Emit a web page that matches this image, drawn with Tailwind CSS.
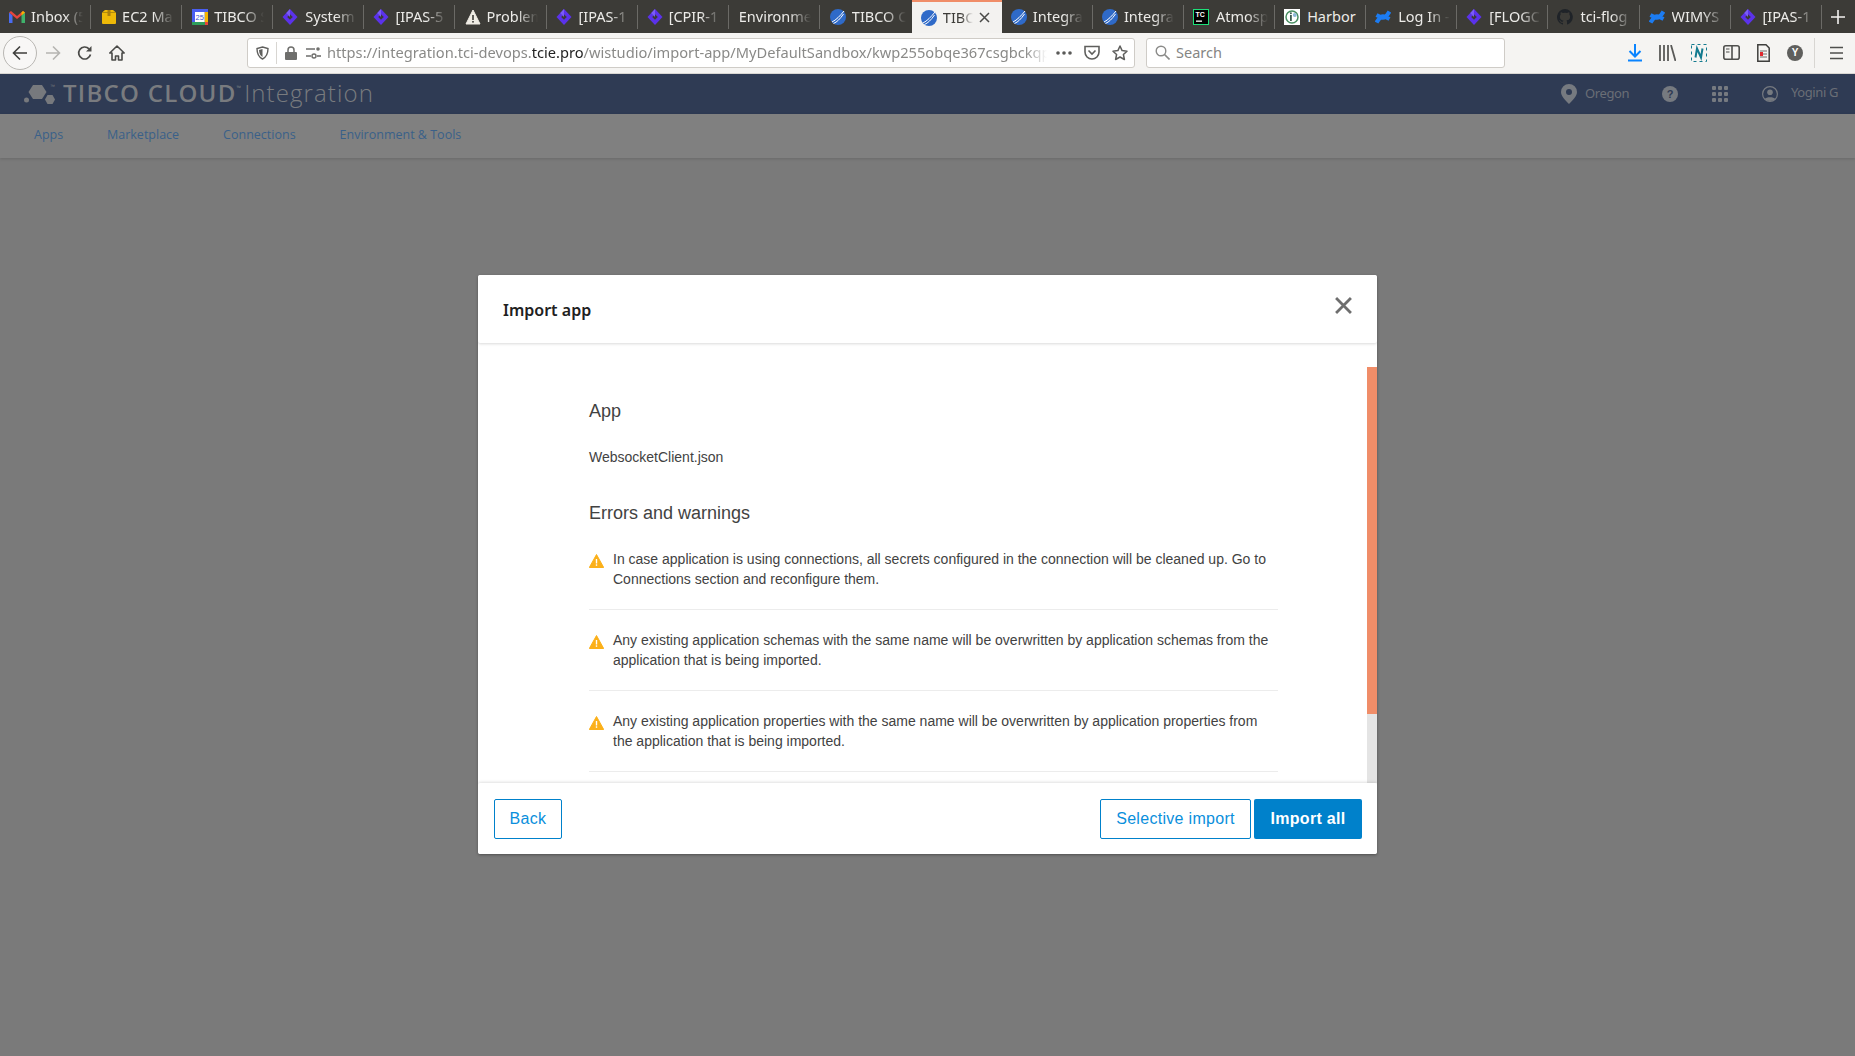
<!DOCTYPE html>
<html lang="en">
<head>
    <meta charset="UTF-8">
    <title>TIBCO Cloud Integration</title>
    <script src="https://cdn.jsdelivr.net/npm/@tailwindcss/browser@4"></script>
</head>
<body class="relative h-[1056px] w-[1855px] overflow-hidden bg-[#7a7a7a] font-['Noto_Sans',sans-serif]">

    <!-- shared favicons -->
    <svg class="hidden">
        <symbol id="jira" viewBox="0 0 16 16"><path d="M8 0 15.500 8 8 16 .5 8Z" fill="#5b32ea"/><path d="M8 5.200 10.800 8 8 10.800 5.200 8Z" fill="#3c3b37"/><path d="M8 0 4.300 4 8 8Z" fill="#7a5cf5"/></symbol>
        <symbol id="tibco" viewBox="0 0 16 16"><circle cx="8" cy="8" r="8" fill="#2f6ac8"/><path d="M2 13C6 11 10 7 14 2M3.500 14.500C7 13 10 10 13.500 5" stroke="#fff" stroke-width="1" fill="none"/></symbol>
        <symbol id="confluence" viewBox="0 0 16 16"><path d="M1.500 13.500C5 7.500 7 6.500 10 7.700L14.500 10M14.500 2.500C11 8.500 9 9.500 6 8.300L1.500 6" fill="none" stroke="#1c7cf2" stroke-width="4.200"/></symbol>
    </svg>

    <!-- Tab strip -->
    <div class="flex h-[33px] items-center bg-[#3c3b37] text-[14.5px] text-[#ecebe8]">
        <div class="relative flex h-full w-[91.1px] shrink-0 items-center pl-[9px]">
            <svg class="h-[14px] w-4 shrink-0" viewBox="0 0 16 14"><path d="M2 1 8 6l6-5 2 1.500L8 9 0 2.500Z" fill="#e8453c"/><path d="M0 2.500V13h3.500V5.500Z" fill="#4a6cf0"/><path d="M16 2.500V13h-3.500V5.500Z" fill="#3fb26b"/><path d="M12.500 5.500 16 2.500 14 1 12.500 2.300Z" fill="#f4b400"/></svg>
            <span class="ml-[6px] w-[52px] overflow-hidden whitespace-nowrap [mask-image:linear-gradient(to_right,black_65%,transparent)]">Inbox (5</span>
            <span class="absolute right-0 h-[24px] w-px bg-[#6b6a66]"></span>
        </div>
        <div class="relative flex h-full w-[91.1px] shrink-0 items-center pl-[10px]">
            <svg class="h-4 w-4 shrink-0" viewBox="0 0 16 16"><path d="M1 3.500 4 1h8l3 2.500V14a1 1 0 0 1-1 1H2a1 1 0 0 1-1-1Z" fill="#eeb908"/><path d="M1 3.500H15" stroke="#8a6b12" stroke-width=".6"/><rect x="6.500" y="1" width="3" height="6" fill="#a87f10"/></svg>
            <span class="ml-[5px] w-[52px] overflow-hidden whitespace-nowrap [mask-image:linear-gradient(to_right,black_60%,transparent)]">EC2 Ma</span>
            <span class="absolute right-0 h-[24px] w-px bg-[#6b6a66]"></span>
        </div>
        <div class="relative flex h-full w-[91.1px] shrink-0 items-center pl-[10px]">
            <svg class="h-4 w-4 shrink-0" viewBox="0 0 16 16"><rect width="16" height="16" fill="#4a5ff0"/><rect x="12.500" y="3" width="3.500" height="10" fill="#f4b400"/><rect x="3" y="3" width="9.500" height="10" fill="#fff"/><rect y="13" width="13" height="3" fill="#2e9e5b"/><rect x="13" y="13" width="3" height="3" fill="#e8453c"/><text x="7.700" y="11" text-anchor="middle" font-size="7.500" font-family="Liberation Sans" fill="#3b4fd0">25</text></svg>
            <span class="ml-[6px] w-[50px] overflow-hidden whitespace-nowrap [mask-image:linear-gradient(to_right,black_60%,transparent)]">TIBCO S</span>
            <span class="absolute right-0 h-[24px] w-px bg-[#6b6a66]"></span>
        </div>
        <div class="relative flex h-full w-[91.1px] shrink-0 items-center pl-[9px]">
            <svg class="h-4 w-4 shrink-0"><use href="#jira"/></svg>
            <span class="ml-[7px] w-[52px] overflow-hidden whitespace-nowrap [mask-image:linear-gradient(to_right,black_60%,transparent)]">System</span>
            <span class="absolute right-0 h-[24px] w-px bg-[#6b6a66]"></span>
        </div>
        <div class="relative flex h-full w-[91.1px] shrink-0 items-center pl-[9px]">
            <svg class="h-4 w-4 shrink-0"><use href="#jira"/></svg>
            <span class="ml-[6px] w-[52px] overflow-hidden whitespace-nowrap [mask-image:linear-gradient(to_right,black_60%,transparent)]">[IPAS-5</span>
            <span class="absolute right-0 h-[24px] w-px bg-[#6b6a66]"></span>
        </div>
        <div class="relative flex h-full w-[91.1px] shrink-0 items-center pl-[10px]">
            <svg class="h-4 w-4 shrink-0" viewBox="0 0 16 16"><path d="M8 1 15 15H1Z" fill="#efece4" stroke="#efece4" stroke-linejoin="round"/><rect x="7.200" y="6" width="1.600" height="5" fill="#3c3b37"/><rect x="7.200" y="12" width="1.600" height="1.600" fill="#3c3b37"/></svg>
            <span class="ml-[5px] w-[52px] overflow-hidden whitespace-nowrap [mask-image:linear-gradient(to_right,black_60%,transparent)]">Problem</span>
            <span class="absolute right-0 h-[24px] w-px bg-[#6b6a66]"></span>
        </div>
        <div class="relative flex h-full w-[91.1px] shrink-0 items-center pl-[9px]">
            <svg class="h-4 w-4 shrink-0"><use href="#jira"/></svg>
            <span class="ml-[7px] w-[52px] overflow-hidden whitespace-nowrap [mask-image:linear-gradient(to_right,black_60%,transparent)]">[IPAS-1</span>
            <span class="absolute right-0 h-[24px] w-px bg-[#6b6a66]"></span>
        </div>
        <div class="relative flex h-full w-[91.1px] shrink-0 items-center pl-[9px]">
            <svg class="h-4 w-4 shrink-0"><use href="#jira"/></svg>
            <span class="ml-[6px] w-[52px] overflow-hidden whitespace-nowrap [mask-image:linear-gradient(to_right,black_60%,transparent)]">[CPIR-1</span>
            <span class="absolute right-0 h-[24px] w-px bg-[#6b6a66]"></span>
        </div>
        <div class="relative flex h-full w-[91.1px] shrink-0 items-center pl-[10px]">
            <span class="w-[72px] overflow-hidden whitespace-nowrap [mask-image:linear-gradient(to_right,black_70%,transparent)]">Environme</span>
            <span class="absolute right-0 h-[24px] w-px bg-[#6b6a66]"></span>
        </div>
        <div class="relative flex h-full w-[92px] shrink-0 items-center pl-[10px]">
            <svg class="h-4 w-4 shrink-0"><use href="#tibco"/></svg>
            <span class="ml-[6px] w-[54px] overflow-hidden whitespace-nowrap [mask-image:linear-gradient(to_right,black_60%,transparent)]">TIBCO C</span>
        </div>
        <!-- active tab -->
        <div class="relative flex h-full w-[90px] shrink-0 items-center border-t-2 border-[#f08d68] bg-[#f3f2f0] pl-[9px] text-[#3c3b37]">
            <svg class="h-4 w-4 shrink-0"><use href="#tibco"/></svg>
            <span class="ml-[6px] w-[30px] overflow-hidden whitespace-nowrap [mask-image:linear-gradient(to_right,black_60%,transparent)]">TIBC</span>
            <svg class="ml-[6px] h-[11px] w-[11px]" viewBox="0 0 11 11"><path d="M1 1 10 10M10 1 1 10" stroke="#4a4a48" stroke-width="1.500"/></svg>
        </div>
        <div class="relative flex h-full w-[91.1px] shrink-0 items-center pl-[9px]">
            <svg class="h-4 w-4 shrink-0"><use href="#tibco"/></svg>
            <span class="ml-[6px] w-[50px] overflow-hidden whitespace-nowrap [mask-image:linear-gradient(to_right,black_60%,transparent)]">Integra</span>
            <span class="absolute right-0 h-[24px] w-px bg-[#6b6a66]"></span>
        </div>
        <div class="relative flex h-full w-[91.1px] shrink-0 items-center pl-[9px]">
            <svg class="h-4 w-4 shrink-0"><use href="#tibco"/></svg>
            <span class="ml-[6px] w-[50px] overflow-hidden whitespace-nowrap [mask-image:linear-gradient(to_right,black_60%,transparent)]">Integra</span>
            <span class="absolute right-0 h-[24px] w-px bg-[#6b6a66]"></span>
        </div>
        <div class="relative flex h-full w-[91.1px] shrink-0 items-center pl-[9px]">
            <svg class="h-4 w-4 shrink-0" viewBox="0 0 16 16"><rect width="16" height="16" fill="#1ee07a"/><rect x="1" y="1" width="14" height="14" fill="#000"/><rect x="3" y="11.500" width="6" height="1.300" fill="#fff"/><text x="2.500" y="8" font-size="7" font-weight="700" font-family="Liberation Sans" fill="#fff">TC</text></svg>
            <span class="ml-[7px] w-[52px] overflow-hidden whitespace-nowrap [mask-image:linear-gradient(to_right,black_60%,transparent)]">Atmosp</span>
            <span class="absolute right-0 h-[24px] w-px bg-[#6b6a66]"></span>
        </div>
        <div class="relative flex h-full w-[91.1px] shrink-0 items-center pl-[9px]">
            <svg class="h-4 w-4 shrink-0" viewBox="0 0 16 16"><rect width="16" height="16" fill="#fff"/><circle cx="8" cy="8" r="6" fill="none" stroke="#4a8f62" stroke-width="1.500"/><rect x="6" y="6" width="1.800" height="6" fill="#3b5a4e"/><circle cx="6.900" cy="4.300" r="1" fill="#3b5a4e"/><circle cx="10.800" cy="6" r="2" fill="#8fb9d8"/></svg>
            <span class="ml-[7px] whitespace-nowrap">Harbor</span>
            <span class="absolute right-0 h-[24px] w-px bg-[#6b6a66]"></span>
        </div>
        <div class="relative flex h-full w-[91.1px] shrink-0 items-center pl-[9px]">
            <svg class="h-4 w-4 shrink-0"><use href="#confluence"/></svg>
            <span class="ml-[7px] w-[52px] overflow-hidden whitespace-nowrap [mask-image:linear-gradient(to_right,black_60%,transparent)]">Log In -</span>
            <span class="absolute right-0 h-[24px] w-px bg-[#6b6a66]"></span>
        </div>
        <div class="relative flex h-full w-[91.1px] shrink-0 items-center pl-[9px]">
            <svg class="h-4 w-4 shrink-0"><use href="#jira"/></svg>
            <span class="ml-[7px] w-[52px] overflow-hidden whitespace-nowrap [mask-image:linear-gradient(to_right,black_60%,transparent)]">[FLOGC</span>
            <span class="absolute right-0 h-[24px] w-px bg-[#6b6a66]"></span>
        </div>
        <div class="relative flex h-full w-[91.1px] shrink-0 items-center pl-[9px]">
            <svg class="h-4 w-4 shrink-0" viewBox="0 0 16 16"><path d="M8 0a8 8 0 0 0-2.500 15.600c.4.100.5-.200.500-.400v-1.400c-2.200.500-2.700-1-2.700-1-.400-.900-.900-1.200-.900-1.200-.700-.500.100-.500.100-.500.800.100 1.200.800 1.200.800.700 1.200 1.900.900 2.300.700.100-.500.300-.900.500-1.100-1.800-.200-3.600-.900-3.600-4 0-.900.300-1.600.800-2.100-.100-.200-.400-1 .100-2.100 0 0 .700-.200 2.200.800a7.500 7.500 0 0 1 4 0c1.500-1 2.200-.800 2.200-.800.400 1.100.200 1.900.100 2.100.500.600.800 1.300.800 2.100 0 3.100-1.900 3.700-3.700 3.900.300.300.600.800.600 1.500v2.200c0 .200.100.500.600.400A8 8 0 0 0 8 0Z" fill="#1f2328"/></svg>
            <span class="ml-[7px] w-[52px] overflow-hidden whitespace-nowrap [mask-image:linear-gradient(to_right,black_60%,transparent)]">tci-flog</span>
            <span class="absolute right-0 h-[24px] w-px bg-[#6b6a66]"></span>
        </div>
        <div class="relative flex h-full w-[91.1px] shrink-0 items-center pl-[9px]">
            <svg class="h-4 w-4 shrink-0"><use href="#confluence"/></svg>
            <span class="ml-[7px] w-[52px] overflow-hidden whitespace-nowrap [mask-image:linear-gradient(to_right,black_60%,transparent)]">WIMYS</span>
            <span class="absolute right-0 h-[24px] w-px bg-[#6b6a66]"></span>
        </div>
        <div class="relative flex h-full w-[91.1px] shrink-0 items-center pl-[9px]">
            <svg class="h-4 w-4 shrink-0"><use href="#jira"/></svg>
            <span class="ml-[7px] w-[52px] overflow-hidden whitespace-nowrap [mask-image:linear-gradient(to_right,black_60%,transparent)]">[IPAS-1</span>
            <span class="absolute right-0 h-[24px] w-px bg-[#6b6a66]"></span>
        </div>
        <svg class="ml-[9px] h-[14px] w-[14px]" viewBox="0 0 14 14"><path d="M7 0V14M0 7H14" stroke="#f2f1ef" stroke-width="1.600"/></svg>
    </div>

    <!-- Toolbar -->
    <div class="flex h-[41px] items-center border-b border-[#d8d6d2] bg-[#f5f4f2] pb-px">
        <div class="ml-[3px] flex h-[34px] w-[34px] items-center justify-center rounded-full border border-[#b9b7b3] bg-[#f8f7f6]">
            <svg class="h-4 w-4" viewBox="0 0 16 16"><path d="M15 8H1.500M8 1.500 1.500 8 8 14.500" fill="none" stroke="#3f3f3d" stroke-width="1.600"/></svg>
        </div>
        <svg class="ml-[8px] h-4 w-4" viewBox="0 0 16 16"><path d="M1 8H14.500M8 1.500 14.500 8 8 14.500" fill="none" stroke="#b5b4b1" stroke-width="1.600"/></svg>
        <svg class="ml-[16px] h-4 w-4" viewBox="0 0 16 16"><path d="M13.500 9.500A6 6 0 1 1 12 3.800" fill="none" stroke="#4a4a48" stroke-width="1.700"/><path d="M14.500 1V6.500H9Z" fill="#4a4a48"/></svg>
        <svg class="ml-[16px] h-4 w-4" viewBox="0 0 16 16"><path d="M8 1 0.800 8H3v7h3.500v-4h3v4H13V8h2.200Z" fill="none" stroke="#4a4a48" stroke-width="1.600" stroke-linejoin="round"/></svg>

        <!-- URL bar -->
        <div class="ml-[122px] flex h-[30px] w-[888px] items-center rounded-[3px] border border-[#cfccc7] bg-white">
            <svg class="ml-[8px] h-[14px] w-[13px]" viewBox="0 0 13 14"><path d="M6.500 1 12 2.500C12 8 10.500 11 6.500 13 2.500 11 1 8 1 2.500Z" fill="none" stroke="#5f5f5d" stroke-width="1.400"/><path d="M6.500 3v8C4 9.500 3.200 7.500 3 4Z" fill="#5f5f5d"/></svg>
            <span class="ml-[7px] h-[22px] w-px bg-[#d8d6d2]"></span>
            <svg class="ml-[8px] h-[14px] w-[12px]" viewBox="0 0 12 14"><path d="M3 6V4a3 3 0 0 1 6 0v2" fill="none" stroke="#6e6e6c" stroke-width="1.500"/><rect y="6" width="12" height="8" rx="1" fill="#6e6e6c"/></svg>
            <svg class="ml-[9px] h-[13px] w-[15px]" viewBox="0 0 15 13"><path d="M0 3H9M0 10H5" stroke="#6e6e6c" stroke-width="1.600"/><circle cx="12" cy="3" r="1.800" fill="#6e6e6c"/><circle cx="8" cy="10" r="2" fill="none" stroke="#6e6e6c" stroke-width="1.400"/><path d="M11 10H15" stroke="#6e6e6c" stroke-width="1.600"/></svg>
            <div class="ml-[6px] w-[720px] overflow-hidden whitespace-nowrap text-[14.65px] text-[#8a8a88] [mask-image:linear-gradient(to_right,black_97%,transparent)]">https://integration.tci-devops.<span class="text-[#232323]">tcie.pro</span>/wistudio/import-app/MyDefaultSandbox/kwp255obqe367csgbckqp</div>
            <svg class="ml-[9px] h-[4px] w-[16px]" viewBox="0 0 16 4"><circle cx="2" cy="2" r="1.800" fill="#5a5a58"/><circle cx="8" cy="2" r="1.800" fill="#5a5a58"/><circle cx="14" cy="2" r="1.800" fill="#5a5a58"/></svg>
            <svg class="ml-[12px] h-[15px] w-[16px]" viewBox="0 0 16 15"><path d="M1 1.500H15V7A7 7 0 0 1 1 7Z" fill="none" stroke="#5f5f5d" stroke-width="1.600"/><path d="M4.500 5.500 8 9l3.500-3.500" fill="none" stroke="#5f5f5d" stroke-width="1.600"/></svg>
            <svg class="ml-[12px] h-[16px] w-[16px]" viewBox="0 0 16 16"><path d="M8 1 10.100 5.600 15 6.200 11.400 9.500 12.400 14.500 8 12 3.600 14.500 4.600 9.500 1 6.200 5.900 5.600Z" fill="none" stroke="#5f5f5d" stroke-width="1.500" stroke-linejoin="round"/></svg>
        </div>

        <!-- Search bar -->
        <div class="ml-[11px] flex h-[30px] w-[359px] items-center rounded-[3px] border border-[#cfccc7] bg-white">
            <svg class="ml-[8px] h-[15px] w-[15px]" viewBox="0 0 15 15"><circle cx="6" cy="6" r="4.800" fill="none" stroke="#8a8a88" stroke-width="1.400"/><path d="M9.500 9.500 14.500 14.500" stroke="#8a8a88" stroke-width="1.600"/></svg>
            <span class="ml-[6px] text-[14.5px] text-[#858583]">Search</span>
        </div>

        <!-- Toolbar actions -->
        <svg class="ml-[123px] h-[18px] w-[14px]" viewBox="0 0 14 18"><path d="M7 0V12M1.500 7 7 12.500 12.500 7" fill="none" stroke="#0a84ff" stroke-width="2"/><path d="M0 16.500H14" stroke="#0a84ff" stroke-width="2"/></svg>
        <svg class="ml-[17px] h-[16px] w-[17px]" viewBox="0 0 17 16"><path d="M1 0V16M5 0V16M9 0V16M12 0 16.500 16" stroke="#5a5a58" stroke-width="1.800" fill="none"/></svg>
        <svg class="ml-[15px] h-[18px] w-[16px]" viewBox="0 0 16 18"><rect x=".5" y=".5" width="15" height="17" fill="none" stroke="#137a8f" stroke-dasharray="3 3"/><path d="M4.500 13.500 6 4.500 10 13.500 11.500 4.500" fill="none" stroke="#137a8f" stroke-width="2"/></svg>
        <svg class="ml-[16px] h-[15px] w-[17px]" viewBox="0 0 17 15"><rect x=".8" y=".8" width="15.400" height="13.400" rx="2" fill="none" stroke="#4f4f4d" stroke-width="1.600"/><path d="M9 1V14" stroke="#4f4f4d" stroke-width="1.600"/><path d="M3 4H6.500M3 7H6.500" stroke="#4f4f4d" stroke-width="1.200"/></svg>
        <svg class="ml-[17px] h-[18px] w-[13px]" viewBox="0 0 13 18"><path d="M.8.8H9L12.200 4V17.200H.8Z" fill="none" stroke="#3f3f3d" stroke-width="1.500"/><path d="M3 7H10M3 10H10M3 13H10" stroke="#6e6e6c"/><rect x="3" y="8" width="3" height="4" fill="#e0282e"/></svg>
        <div class="ml-[17px] flex h-4 w-4 items-center justify-center rounded-full bg-[#5f5f5d] font-['Liberation_Sans',sans-serif] text-[10px] font-bold text-white">Y</div>
        <span class="ml-[11px] h-[30px] w-px bg-[#d8d6d2]"></span>
        <svg class="ml-[15px] h-[14px] w-[13px]" viewBox="0 0 13 14"><path d="M0 1.500H13M0 7H13M0 12.500H13" stroke="#4f4f4d" stroke-width="1.700"/></svg>
    </div>

    <!-- App header -->
    <div class="flex h-[40px] items-center bg-[#2f3b54] text-[#797b7f]">
        <svg class="ml-[24px] h-[20px] w-[32px]" viewBox="0 0 32 20" fill="#77797d"><path d="M4.500 8 9 1H18L22.500 8 18 15H9Z"/><path d="M21 15.500 23.500 11H28.500L31 15.500 28.500 20H23.500Z"/><circle cx="2.500" cy="16" r="2.500"/><text x="26" y="4" font-size="5" font-family="Liberation Sans">™</text></svg>
        <span class="ml-[7px] pb-[2px] font-['Open_Sans',sans-serif] text-[24px] font-semibold leading-none tracking-[1.27px]">TIBCO CLOUD<sup class="top-[-12px] text-[6px] font-normal tracking-normal">™</sup></span>
        <span class="ml-[3px] pb-[2px] font-['Open_Sans',sans-serif] text-[24px] font-light leading-none tracking-[1.1px]">Integration</span>
        <div class="ml-auto flex items-center text-[13px] tracking-[-0.4px]">
            <svg class="h-[20px] w-[16px]" viewBox="0 0 16 20"><path fill-rule="evenodd" d="M8 0a8 8 0 0 1 8 8c0 4-4 8-8 12C4 16 0 12 0 8a8 8 0 0 1 8-8Zm0 5a3 3 0 1 0 0 6 3 3 0 0 0 0-6Z" fill="#767a80"/></svg>
            <span class="ml-[8px] w-[43px] text-[#6a6e76]">Oregon</span>
            <div class="ml-[34px] flex h-4 w-4 items-center justify-center rounded-full bg-[#767a80] font-['Liberation_Sans',sans-serif] text-[11px] font-bold tracking-normal text-[#2f3b54]">?</div>
            <svg class="ml-[34px] h-4 w-4" viewBox="0 0 16 16" fill="#767a80"><rect width="4" height="4" rx="1"/><rect x="6" width="4" height="4" rx="1"/><rect x="12" width="4" height="4" rx="1"/><rect y="6" width="4" height="4" rx="1"/><rect x="6" y="6" width="4" height="4" rx="1"/><rect x="12" y="6" width="4" height="4" rx="1"/><rect y="12" width="4" height="4" rx="1"/><rect x="6" y="12" width="4" height="4" rx="1"/><rect x="12" y="12" width="4" height="4" rx="1"/></svg>
            <svg class="ml-[34px] h-4 w-4" viewBox="0 0 16 16"><circle cx="8" cy="8" r="7.400" fill="none" stroke="#767a80" stroke-width="1.200"/><circle cx="8" cy="6.200" r="2.800" fill="#767a80"/><path d="M2.800 13C4 10.500 12 10.500 13.200 13 11 15.500 5 15.500 2.800 13Z" fill="#767a80"/></svg>
            <span class="mb-[2px] ml-[13px] mr-[18px] w-[46px] whitespace-nowrap text-[#6a6e76]">Yogini G</span>
        </div>
    </div>

    <!-- App nav -->
    <div class="flex h-[44px] items-center gap-[44px] bg-[#808080] pb-[2px] pl-[34px] font-['Open_Sans',sans-serif] text-[12.5px] text-[#3a6089] shadow-[0_1px_3px_rgba(0,0,0,0.15)]">
        <span class="w-[29px]">Apps</span>
        <span>Marketplace</span>
        <span>Connections</span>
        <span>Environment &amp; Tools</span>
    </div>

    <!-- Import dialog -->
    <div class="absolute left-[478px] top-[275px] flex h-[579px] w-[899px] flex-col overflow-hidden rounded-[2px] bg-white font-['Liberation_Sans',sans-serif] text-[#424242] shadow-[0_1px_3px_rgba(0,0,0,0.35)]">
        <div class="relative z-10 flex h-[68px] shrink-0 items-start justify-between rounded-[2px] bg-white pl-[25px] pr-[25px] shadow-[0_1px_3px_rgba(0,0,0,0.15)]">
            <h2 class="mt-[23px] font-['Noto_Sans',sans-serif] text-[16px] font-semibold leading-[24px] text-[#212121]">Import app</h2>
            <svg class="mt-[22px] h-[17px] w-[17px]" viewBox="0 0 16 16"><path d="M1 1 15 15M15 1 1 15" stroke="#6e6e6e" stroke-width="2.600"/></svg>
        </div>

        <div class="relative min-h-0 flex-1 overflow-hidden">
            <div class="ml-[111px] w-[689px] pt-[56px]">
                <h3 class="text-[18px] leading-[24px]">App</h3>
                <p class="mt-[24px] text-[14px] leading-[20px]">WebsocketClient.json</p>
                <h3 class="mt-[34px] text-[18px] leading-[24px]">Errors and warnings</h3>
                <ul class="mt-[24px] text-[14px] leading-[20px]">
                    <li class="flex border-b border-[#ececec] pb-[20px]">
                        <svg class="mt-[5px] h-[14px] w-[15px] shrink-0" viewBox="0 0 15 14"><path d="M7.500.5 14.700 13.500H.3Z" fill="#fbb01a" stroke="#fbb01a" stroke-linejoin="round"/><rect x="6.800" y="5" width="1.400" height="4.500" fill="#fff"/><rect x="6.800" y="10.300" width="1.400" height="1.500" fill="#fff"/></svg>
                        <p class="ml-[9px]">In case application is using connections, all secrets configured in the connection will be cleaned up. Go to Connections section and reconfigure them.</p>
                    </li>
                    <li class="flex border-b border-[#ececec] py-[20px]">
                        <svg class="mt-[5px] h-[14px] w-[15px] shrink-0" viewBox="0 0 15 14"><path d="M7.500.5 14.700 13.500H.3Z" fill="#fbb01a" stroke="#fbb01a" stroke-linejoin="round"/><rect x="6.800" y="5" width="1.400" height="4.500" fill="#fff"/><rect x="6.800" y="10.300" width="1.400" height="1.500" fill="#fff"/></svg>
                        <p class="ml-[9px]">Any existing application schemas with the same name will be overwritten by application schemas from the application that is being imported.</p>
                    </li>
                    <li class="flex border-b border-[#ececec] py-[20px]">
                        <svg class="mt-[5px] h-[14px] w-[15px] shrink-0" viewBox="0 0 15 14"><path d="M7.500.5 14.700 13.500H.3Z" fill="#fbb01a" stroke="#fbb01a" stroke-linejoin="round"/><rect x="6.800" y="5" width="1.400" height="4.500" fill="#fff"/><rect x="6.800" y="10.300" width="1.400" height="1.500" fill="#fff"/></svg>
                        <p class="ml-[9px]">Any existing application properties with the same name will be overwritten by application properties from the application that is being imported.</p>
                    </li>
                </ul>
            </div>
            <!-- scrollbar -->
            <div class="absolute bottom-0 right-0 top-[24px] w-[10px] bg-[#e4e4e4]">
                <div class="h-[347px] bg-[#f08d68]"></div>
            </div>
        </div>

        <div class="relative z-10 flex h-[71px] shrink-0 items-start rounded-[2px] bg-white pl-[16px] pr-[15px] pt-[16px] shadow-[0_-1px_3px_rgba(0,0,0,0.12)]">
            <button class="h-[40px] w-[68px] rounded-[2px] border border-[#0081cb] text-[16px] tracking-[0.3px] text-[#0a8fdc]">Back</button>
            <button class="ml-auto h-[40px] w-[151px] rounded-[2px] border border-[#0081cb] text-[16px] tracking-[0.3px] text-[#0a8fdc]">Selective import</button>
            <button class="ml-[3px] h-[40px] w-[108px] rounded-[2px] bg-[#0081cb] text-[16px] font-bold tracking-[0.3px] text-white">Import all</button>
        </div>
    </div>

</body>
</html>
